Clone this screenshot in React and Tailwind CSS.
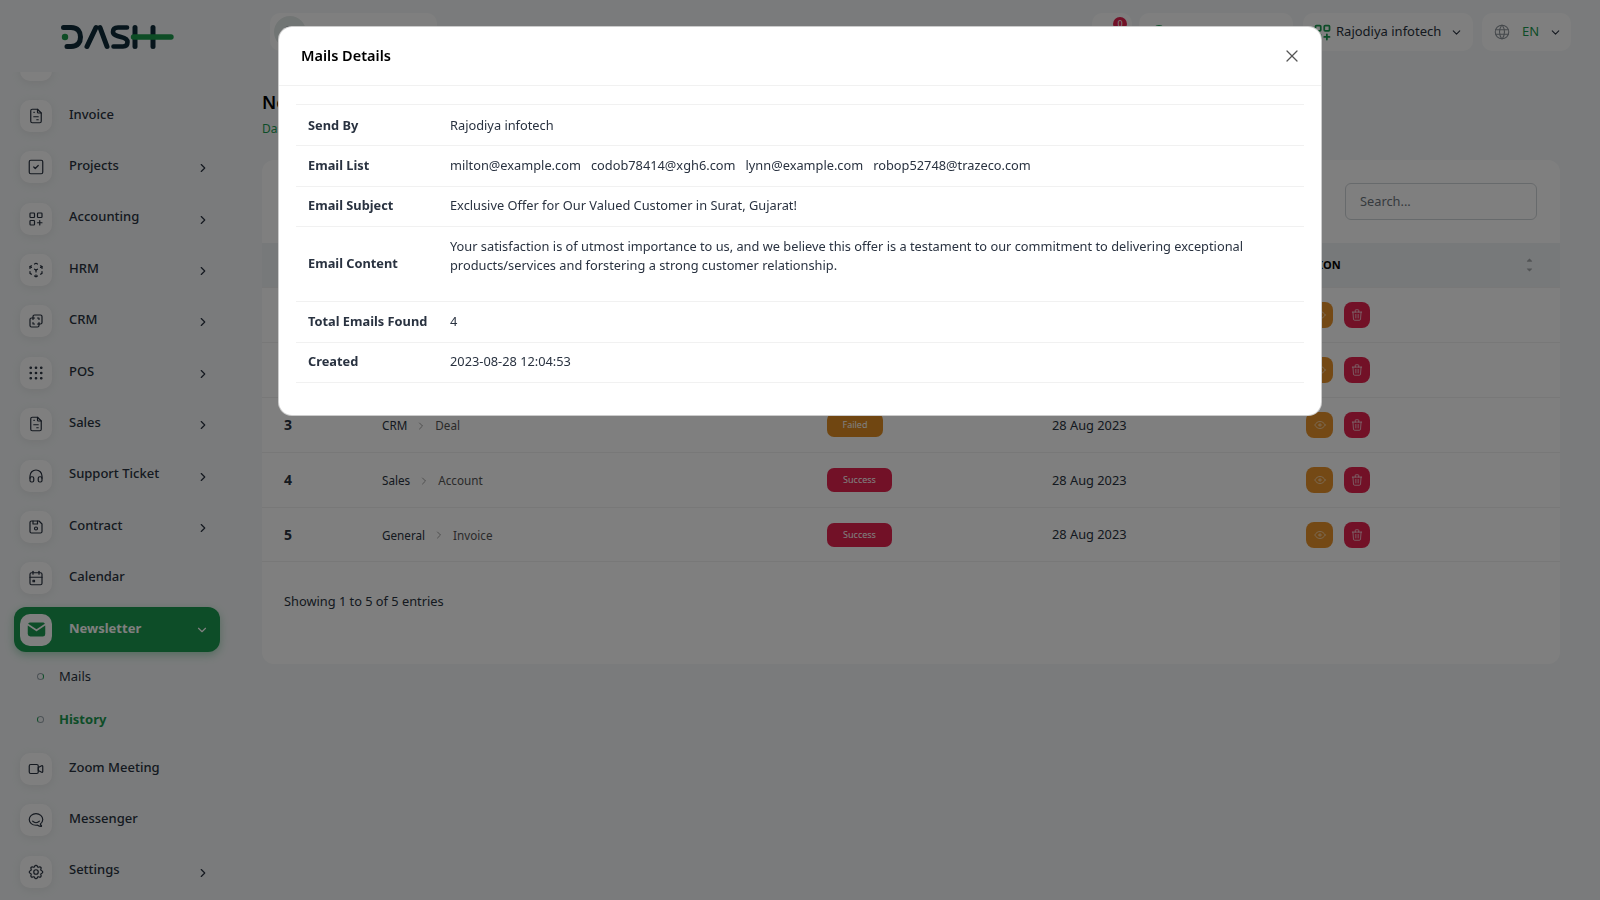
import React from "react";
import {
  TbFileInvoice, TbSquareCheck, TbLayoutGridAdd, TbCube3dSphere, TbLayersDifference, TbGridDots,
  TbHeadphones, TbDeviceFloppy, TbCalendarEvent, TbMailFilled, TbVideo, TbBrandHipchat, TbSettings,
  TbChevronRight, TbChevronDown, TbEye, TbTrash, TbWorld, TbX, TbCaretUpFilled, TbCaretDownFilled,
  TbSearch,
} from "react-icons/tb";

const font = { fontFamily: '"Noto Sans", "Open Sans", sans-serif' };

const before = [
  { label: "Dashboard", Icon: TbLayoutGridAdd },
  { label: "Invoice", Icon: TbFileInvoice },
  { label: "Projects", Icon: TbSquareCheck, more: true },
  { label: "Accounting", Icon: TbLayoutGridAdd, more: true },
  { label: "HRM", Icon: TbCube3dSphere, more: true },
  { label: "CRM", Icon: TbLayersDifference, more: true },
  { label: "POS", Icon: TbGridDots, more: true },
  { label: "Sales", Icon: TbFileInvoice, more: true },
  { label: "Support Ticket", Icon: TbHeadphones, more: true },
  { label: "Contract", Icon: TbDeviceFloppy, more: true },
  { label: "Calendar", Icon: TbCalendarEvent },
];
const after = [
  { label: "Zoom Meeting", Icon: TbVideo },
  { label: "Messenger", Icon: TbBrandHipchat },
  { label: "Settings", Icon: TbSettings, more: true },
];

const rows = [
  { n: "1", st: "Success" },
  { n: "2", st: "Success" },
  { n: "3", a: "CRM", b: "Deal", st: "Failed", date: "28 Aug 2023" },
  { n: "4", a: "Sales", b: "Account", st: "Success", date: "28 Aug 2023" },
  { n: "5", a: "General", b: "Invoice", st: "Success", date: "28 Aug 2023" },
];

function NavItem({ label, Icon, more }) {
  return (
    <div className="mx-[14px] mb-[6.4px] flex h-[45px] shrink-0 items-center pl-[6px] pr-[10px]">
      <span className="flex h-8 w-8 items-center justify-center rounded-[10px] bg-white text-[#293240] shadow-[0_2px_8px_rgba(170,170,170,0.2)]">
        <Icon size={18} strokeWidth={1.6} />
      </span>
      <span className="ml-[17px] mb-[3px] flex-1 text-[13px] font-medium text-[#293240]">{label}</span>
      {more && <TbChevronRight size={14} strokeWidth={2} className="mt-[2px] text-[#293240]" />}
    </div>
  );
}

function Logo() {
  return (
    <svg width="114" height="28" viewBox="0 0 114 28" fill="none" strokeLinecap="round">
      <g stroke="#0e2a38" strokeWidth="5" fill="none">
        <path d="M3.5 3.5H11C18 3.5 20.5 8 20.5 13S18 22.5 11 22.5H7" />
        <path d="M27 22.5L36 3.5" />
        <path d="M40 3.5L47 22.5" />
        <path d="M67 3.5H58C54 3.5 53 6 53 8C53 11 57 12 61 13C65 14 67.5 15 67.5 18C67.5 21 66 22.5 63 22.5H53.5" strokeWidth="4.6" />
        <path d="M75 3.5V22.5" />
        <path d="M93 3.5V22.5" />
      </g>
      <circle cx="5" cy="13" r="3.2" fill="#1c9a4c" />
      <path d="M73.5 13H111" stroke="#1c9a4c" strokeWidth="5.4" />
    </svg>
  );
}

function Sidebar() {
  return (
    <aside className="flex h-full w-[234px] shrink-0 flex-col overflow-hidden">
      <div className="relative z-10 flex h-[72px] shrink-0 items-center bg-[#f4f7f8] pl-[60px] pt-[4px]">
        <Logo />
      </div>
      <nav className="-mt-[30px] flex flex-col">
        {before.map((it) => <NavItem key={it.label} {...it} />)}
        <div className="mx-[14px] flex h-[45px] shrink-0 items-center rounded-[12px] bg-[#1b9a50] pl-[6px] pr-[11px] shadow-[0_3px_8px_rgba(27,154,80,0.35)]">
          <span className="flex h-8 w-8 items-center justify-center rounded-[10px] bg-white text-[#1b9a50]">
            <TbMailFilled size={21} />
          </span>
          <span className="ml-[17px] mb-[3px] flex-1 text-[13px] font-bold text-white">Newsletter</span>
          <TbChevronDown size={14} strokeWidth={2} className="text-white" />
        </div>
        <div className="mt-[3px] flex h-[43px] items-center pl-[37px] text-[13px] text-[#293240]">
          <span className="mr-[15px] h-[7px] w-[7px] rounded-full border-[1.5px] border-[#9aa5ad] border-r-[#1b9a50]" />
          Mails
        </div>
        <div className="flex h-[43px] items-center pl-[37px] text-[13px] font-bold text-[#1b9a50]">
          <span className="mr-[15px] h-[7px] w-[7px] rounded-full border-[1.5px] border-[#9aa5ad] border-l-[#1b9a50]" />
          History
        </div>
        <div className="h-[5px] shrink-0" />
        {after.map((it) => <NavItem key={it.label} {...it} />)}
      </nav>
    </aside>
  );
}

function TopBar() {
  return (
    <header className="ml-[36px] mr-[29px] mt-[13px] flex h-[38px] items-center text-[13px] text-[#293240]">
      <div className="flex h-[38px] w-[167px] items-center rounded-[10px] bg-white pl-[4px]">
        <span className="flex h-[32px] w-[32px] items-center justify-center rounded-full bg-[#e3eae8]">
          <TbSearch size={14} />
        </span>
      </div>
      <div className="relative ml-auto h-[38px] w-[40px] rounded-[10px] bg-white">
        <span className="absolute left-[21px] top-[4px] flex h-[14px] w-[14px] items-center justify-center rounded-full bg-[#e5234f] text-[9px] text-white">0</span>
      </div>
      <div className="relative ml-[7px] h-[38px] w-[154px] rounded-[10px] bg-white">
        <span className="absolute left-[13px] top-[12px] h-[14px] w-[14px] rounded-full bg-[#1b9a50]" />
      </div>
      <div className="ml-[10px] flex h-[38px] w-[170px] items-center whitespace-nowrap rounded-[10px] bg-white pl-[9px]">
        <TbLayoutGridAdd size={21} className="shrink-0 text-[#1b9a50]" />
        <span className="ml-[3px]">Rajodiya infotech</span>
        <TbChevronDown size={13} className="ml-[9px]" />
      </div>
      <div className="ml-[9px] flex h-[38px] w-[89px] items-center rounded-[10px] bg-white pl-[11px]">
        <TbWorld size={18} strokeWidth={1.4} className="text-[#8b9299]" />
        <span className="ml-[11px] text-[#1b9a50]">EN</span>
        <TbChevronDown size={13} className="ml-[10px]" />
      </div>
    </header>
  );
}

function Table() {
  return (
    <div className="w-full text-[12.8px] text-[#293240]">
      <div className="flex h-[44px] items-center justify-end bg-[#eff2f4] text-[11px] font-bold text-black">
        <span className="flex-1 pl-[1036px]">ACTION</span>
        <span className="mr-[26px] flex flex-col text-[#a4a8ab]">
          <TbCaretUpFilled size={9} />
          <TbCaretDownFilled size={9} />
        </span>
      </div>
      {rows.map(({ n, a, b, st, date }) => (
        <div key={n} className="flex h-[55px] items-center border-t border-[#f1f1f1] last:border-b">
          <span className="mb-[1px] ml-[22px] w-[98px] text-[14px] font-bold">{n}</span>
          <span className="mt-[2px] flex w-[445px] items-center text-[11.7px] text-[#293240]">
            {a}
            {b && <TbChevronRight size={12} strokeWidth={1.4} className="mx-[8px] text-[#777]" />}
            <span className="text-[#555]">{b}</span>
          </span>
          <span className="w-[225px]">
            <span className={`inline-flex h-[24px] items-center justify-center rounded-[7px] text-[9px] text-white ${st === "Failed" ? "w-[56px] bg-[#e18d22]" : "w-[65px] bg-[#e5234f]"}`}>
              {st}
            </span>
          </span>
          <span className="mt-[1px] w-[254px]">{date}</span>
          <span className="flex items-center gap-[11px]">
            <span className="flex h-[26px] w-[27px] items-center justify-center rounded-[8px] bg-[#e9932a] text-white/60">
              <TbEye size={14} strokeWidth={1.6} />
            </span>
            <span className="flex h-[26px] w-[26px] items-center justify-center rounded-[8px] bg-[#e5234f] text-white/70">
              <TbTrash size={14} strokeWidth={1.6} />
            </span>
          </span>
        </div>
      ))}
    </div>
  );
}

function Main() {
  return (
    <main className="min-w-0 flex-1">
      <TopBar />
      <div className="ml-[28px] mr-[40px]">
        <h1 className="mt-[37px] text-[18px] leading-[28px] font-semibold text-black">Newsletter History</h1>
        <p className="mt-[5px] text-[12px] leading-[16px] text-[#1b9a50]">Dashboard</p>
        <section className="mt-[23px] h-[504px] rounded-[12px] bg-white">
          <div className="flex h-[83px] items-start justify-end pr-[23px] pt-[23px]">
            <div className="flex h-[37px] w-[192px] items-center rounded-[6px] border border-[#cfd4d8] pl-[14px] text-[12.8px] text-[#6c757d]">Search...</div>
          </div>
          <Table />
          <p className="ml-[22px] mt-[30px] text-[12.8px] text-[#293240]">Showing 1 to 5 of 5 entries</p>
        </section>
      </div>
    </main>
  );
}

function Row({ label, h, first, children }) {
  const nudge = first ? "pt-[1px]" : "pb-[1px]";
  return (
    <tr className="border-t border-[#f1f1f1]" style={{ height: h }}>
      <td className={`w-[154px] pl-[12px] align-middle text-[12.8px] font-bold text-[#293240] ${nudge}`}>{label}</td>
      <td className={`align-middle text-[12.8px] text-[#293240] ${nudge}`}>{children}</td>
    </tr>
  );
}

function Modal() {
  return (
    <div className="fixed inset-0 z-50 flex justify-center bg-black/50 pt-[26px]">
      <div className="h-[390px] w-[1044px] rounded-[14px] border border-black/20 bg-white">
        <div className="flex h-[59px] items-center justify-between border-b border-[#f1f1f1] pl-[22px] pr-[19px]">
          <h2 className="text-[14.5px] font-semibold text-black">Mails Details</h2>
          <TbX size={20} strokeWidth={1.5} className="text-[#555]" />
        </div>
        <div className="px-[17px] pt-[18px]">
          <table className="w-full border-b border-[#f1f1f1]">
            <tbody>
              <Row label="Send By" h={41} first>Rajodiya infotech</Row>
              <Row label="Email List" h={41}>
                <span className="flex gap-[10px]">
                  <span>milton@example.com</span>
                  <span>codob78414@xgh6.com</span>
                  <span>lynn@example.com</span>
                  <span>robop52748@trazeco.com</span>
                </span>
              </Row>
              <Row label="Email Subject" h={40}>Exclusive Offer for Our Valued Customer in Surat, Gujarat!</Row>
              <Row label="Email Content" h={75}>
                <span className="block pb-[15px] leading-[19.5px]">
                  Your satisfaction is of utmost importance to us, and we believe this offer is a testament to our commitment to delivering exceptional
                  <br />
                  products/services and forstering a strong customer relationship.
                </span>
              </Row>
              <Row label="Total Emails Found" h={41}>4</Row>
              <Row label="Created" h={40}>2023-08-28 12:04:53</Row>
            </tbody>
          </table>
        </div>
      </div>
    </div>
  );
}

export default function App() {
  return (
    <div style={font} className="relative flex h-[900px] w-[1600px] overflow-hidden bg-[#f4f7f8]">
      <Sidebar />
      <Main />
      <Modal />
    </div>
  );
}
